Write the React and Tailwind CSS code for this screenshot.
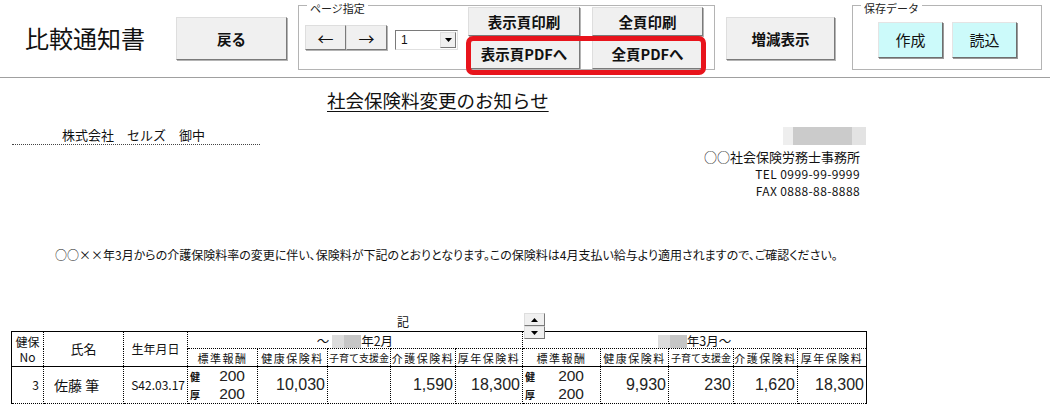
import React from "react";

const jp = "font-['Noto_Sans_CJK_JP',sans-serif]";
const num = "font-['Liberation_Sans','Noto_Sans_CJK_JP',sans-serif]";

// raised grey push button, classic look
const Btn = ({ children, className = "" }) => (
  <div
    className={`flex items-center justify-center bg-[#f0f0f0] border border-[#dedede] border-r-[#7a7a7a] border-b-[#7a7a7a] shadow-[1px_1px_0_#b4b4b4] text-[#111] ${className}`}
  >
    {children}
  </div>
);

const CyanBtn = ({ children }) => (
  <div className="flex items-center justify-center w-[65px] h-[36px] bg-[#ccfafa] border border-[#e4e4e4] border-r-[#6e6e6e] border-b-[#6e6e6e] shadow-[1px_1px_0_#9a9a9a] text-[15px] text-[#111]">
    {children}
  </div>
);

const GroupBox = ({ label, className = "", children }) => (
  <div className={`relative border border-[#b4b4b4] ${className}`}>
    <span className="absolute -top-[5px] left-[8px] bg-white px-[3px] text-[11px] leading-[14px] text-[#222]">
      {label}
    </span>
    {children}
  </div>
);

const Tri = ({ down }) => (
  <svg width="7" height="4" viewBox="0 0 7 4">
    <path d={down ? "M0 0 L7 0 L3.5 4Z" : "M0 4 L3.5 0 L7 4Z"} fill="#000" />
  </svg>
);

// greyed-out (masked) year
const Masked = () => (
  <span className="inline-flex h-[13px] align-[-2px]">
    <span className="w-[12px] bg-[#dcdcdc]" />
    <span className="w-[17px] bg-[#c6c6c6]" />
  </span>
);

const cell = "border border-dotted border-black p-0";
const solidB = "[border-bottom-style:solid]";

const Std = ({ pr }) => (
  <div className="flex flex-col">
    {["健", "厚"].map((k) => (
      <div key={k} className="flex justify-between items-center h-[18px]">
        <span className="pl-[2px] text-[10px] font-bold leading-[11px]">{k}</span>
        <span className={`${num} text-[15.5px] leading-[18px] text-[#222] ${pr}`}>200</span>
      </div>
    ))}
  </div>
);

const Num = ({ v }) => (
  <td className={`${cell} ${num} text-right pr-[2px] text-[16px] text-[#222]`}>{v}</td>
);

const labels = ["標準報酬", "健康保険料", "子育て支援金", "介護保険料", "厚年保険料"];

const headCells = (g) =>
  labels.map((l) => (
    <td
      key={g + l}
      className={`${cell} ${solidB} text-center leading-[14px] ${
        l === "子育て支援金" ? "text-[10px]" : "text-[11px] tracking-[1.5px]"
      }`}
    >
      {l}
    </td>
  ));

export default function App() {
  return (
    <div className={`w-[1050px] h-[404px] overflow-hidden bg-white text-[#111] ${jp}`}>
      {/* toolbar */}
      <div className="flex items-start h-[78px] border-b border-[#a0a0a0]">
        <div className="w-[176px] pl-[25px] pt-[24px] text-[24px] leading-[28px]">比較通知書</div>
        <Btn className="mt-[17px] w-[111px] h-[43px] font-bold text-[14.5px]">戻る</Btn>

        <GroupBox label="ページ指定" className="ml-[11px] mt-[5px] w-[417px] h-[65px]">
          <div className="flex items-start">
            <div className="ml-[6px] mt-[19px] flex">
              <Btn className="w-[41px] h-[25px] text-[16px]">←</Btn>
              <Btn className="w-[41px] h-[25px] text-[16px]">→</Btn>
            </div>
            <div className="ml-[8px] mt-[24px] w-[63px] h-[20px] flex items-center justify-between border border-[#7a7a7a] border-r-[#e0e0e0] border-b-[#e0e0e0] bg-white">
              <span className="pl-[5px] text-[12px] leading-[14px] font-['Liberation_Sans',sans-serif]">1</span>
              <Btn className="w-[16px] h-[16px] mr-[1px] shadow-none">
                <Tri down />
              </Btn>
            </div>
            <div className="ml-[10px] mt-[1px] grid grid-cols-[112px_111px] gap-x-[12px] gap-y-[3px] font-bold text-[14.5px]">
              <Btn className="h-[29px]">表示頁印刷</Btn>
              <Btn className="h-[29px]">全頁印刷</Btn>
              <Btn className="h-[30px]">表示頁PDFへ</Btn>
              <Btn className="h-[30px]">全頁PDFへ</Btn>
            </div>
          </div>
          {/* highlight around the PDF buttons */}
          <div className="absolute left-[167px] top-[30px] w-[240px] h-[39px] border-[5px] border-[#e8141c] rounded-[7px]" />
        </GroupBox>

        <Btn className="ml-[11px] mt-[17px] w-[109px] h-[43px] font-bold text-[14.5px]">増減表示</Btn>

        <GroupBox label="保存データ" className="ml-[17px] mt-[5px] w-[190px] h-[65px]">
          <div className="ml-[25px] mt-[16px] flex gap-[9px]">
            <CyanBtn>作成</CyanBtn>
            <CyanBtn>読込</CyanBtn>
          </div>
        </GroupBox>
      </div>

      {/* notice sheet */}
      <div className="flex flex-col">
        <div className="mt-[12px] pl-[327px] text-[18.5px] leading-[20px]">
          <span className="underline underline-offset-[3px]">社会保険料変更のお知らせ</span>
        </div>

        <div className="mt-[16px] flex items-start justify-between w-[866px]">
          <div className="ml-[12px] w-[248px] pl-[50px] border-b border-dotted border-[#444] text-[13px] leading-[18px]">
            株式会社　セルズ　御中
          </div>
          <div className="mt-[1px] flex flex-col items-end">
            <div className="flex h-[18px]">
              <span className="w-[10px] bg-[#eeeeee]" />
              <span className="w-[59px] bg-[#cbcbcb]" />
              <span className="w-[14px] bg-[#e3e3e3]" />
            </div>
            <div className="mt-[4px] mr-[6px] text-[13px] leading-[16px]">○○社会保険労務士事務所</div>
            <div className="mr-[6px] text-[12px] leading-[17px] tracking-[0.4px]">TEL 0999-99-9999</div>
            <div className="mr-[6px] text-[12px] leading-[17px] tracking-[0.4px]">FAX 0888-88-8888</div>
          </div>
        </div>

        <p className="mt-[48px] pl-[55px] text-[12px] leading-[16px] [font-feature-settings:'palt']">
          ○○××年3月からの介護保険料率の変更に伴い、保険料が下記のとおりとなります。この保険料は4月支払い給与より適用されますので、ご確認ください。
        </p>

        <div className="mt-[51px] pl-[397px] text-[12px] leading-[16px]">記</div>

        <div className="relative mt-[1px]">
          {/* spin control */}
          <div className="absolute left-[524px] -top-[18px] w-[21px] flex flex-col">
            <Btn className="h-[13px] shadow-none">
              <Tri />
            </Btn>
            <Btn className="h-[13px] shadow-none">
              <Tri down />
            </Btn>
          </div>

          <table className="ml-[11px] w-[855px] table-fixed border-collapse border-x border-t border-black">
            <colgroup>
              <col className="w-[32px]" />
              <col className="w-[80px]" />
              <col className="w-[64px]" />
              <col className="w-[70px]" />
              <col className="w-[70px]" />
              <col className="w-[63px]" />
              <col className="w-[65px]" />
              <col className="w-[67px]" />
              <col className="w-[78px]" />
              <col className="w-[68px]" />
              <col className="w-[65px]" />
              <col className="w-[64px]" />
              <col className="w-[69px]" />
            </colgroup>
            <tbody>
              <tr className="h-[17px]">
                <td rowSpan={2} className={`${cell} ${solidB} text-center text-[12px] leading-[15px]`}>
                  健保
                  <br />
                  No
                </td>
                <td rowSpan={2} className={`${cell} ${solidB} text-center text-[13px]`}>氏名</td>
                <td rowSpan={2} className={`${cell} ${solidB} text-center text-[12px]`}>生年月日</td>
                <td colSpan={5} className={`${cell} text-center text-[12.5px] leading-[15px]`}>
                  ～ <Masked />年2月
                </td>
                <td colSpan={5} className={`${cell} text-center text-[12.5px] leading-[15px]`}>
                  <Masked />年3月～
                </td>
              </tr>
              <tr className="h-[18px]">
                {headCells("a")}
                {headCells("b")}
              </tr>
              <tr className="h-[36px]">
                <td className={`${cell} text-right pr-[4px] text-[12px]`}>3</td>
                <td className={`${cell} pl-[10px] text-[14px]`}>佐藤 筆</td>
                <td className={`${cell} text-right pr-[2px] text-[12px]`}>S42.03.17</td>
                <td className={cell}>
                  <Std pr="pr-[12px]" />
                </td>
                <Num v="10,030" />
                <Num v="" />
                <Num v="1,590" />
                <Num v="18,300" />
                <td className={cell}>
                  <Std pr="pr-[16px]" />
                </td>
                <Num v="9,930" />
                <Num v="230" />
                <Num v="1,620" />
                <Num v="18,300" />
              </tr>
            </tbody>
          </table>
        </div>
      </div>
    </div>
  );
}
